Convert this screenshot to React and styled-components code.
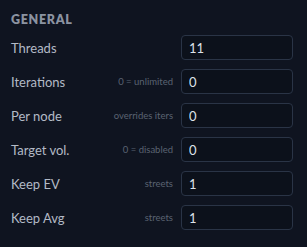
import React from 'react';
import styled, { createGlobalStyle } from 'styled-components';

const Global = createGlobalStyle`
  html, body { margin: 0; padding: 0; background: #0f1420; }
  body { font-family: Lato, "Liberation Sans", sans-serif; }
  * { box-sizing: border-box; }
`;

const Panel = styled.div`
  width: 307px;
  height: 247px;
  background: #0f1420;
  padding: 13px 14px 0 11px;
`;

const Heading = styled.div`
  font-size: 12.5px;
  font-weight: 800;
  letter-spacing: 0.7px;
  color: #8b93a1;
  height: 22px;
  line-height: 14px;
`;

const Rows = styled.div`
  display: flex;
  flex-direction: column;
  gap: 9px;
`;

const Row = styled.div`
  display: grid;
  grid-template-columns: 1fr auto 112px;
  align-items: center;
  column-gap: 8px;
  height: 25px;
`;

const Label = styled.span`
  font-size: 13px;
  color: #b3bac6;
`;

const Hint = styled.span`
  font-size: 9.5px;
  color: #5a6372;
  text-align: right;
`;

const Field = styled.input`
  width: 112px;
  height: 25px;
  background: #0c111b;
  border: 1px solid #2a3446;
  border-radius: 4px;
  color: #dde2ea;
  font-family: Lato, "Liberation Sans", sans-serif;
  font-size: 13px;
  padding: 0 7px;
  outline: none;
`;

const settings = [
  { label: 'Threads', hint: '', value: '11' },
  { label: 'Iterations', hint: '0 = unlimited', value: '0' },
  { label: 'Per node', hint: 'overrides iters', value: '0' },
  { label: 'Target vol.', hint: '0 = disabled', value: '0' },
  { label: 'Keep EV', hint: 'streets', value: '1' },
  { label: 'Keep Avg', hint: 'streets', value: '1' },
];

export default function App() {
  return (
    <>
      <Global />
      <Panel>
        <Heading>GENERAL</Heading>
        <Rows>
          {settings.map((s) => (
            <Row key={s.label}>
              <Label>{s.label}</Label>
              <Hint>{s.hint}</Hint>
              <Field defaultValue={s.value} />
            </Row>
          ))}
        </Rows>
      </Panel>
    </>
  );
}
